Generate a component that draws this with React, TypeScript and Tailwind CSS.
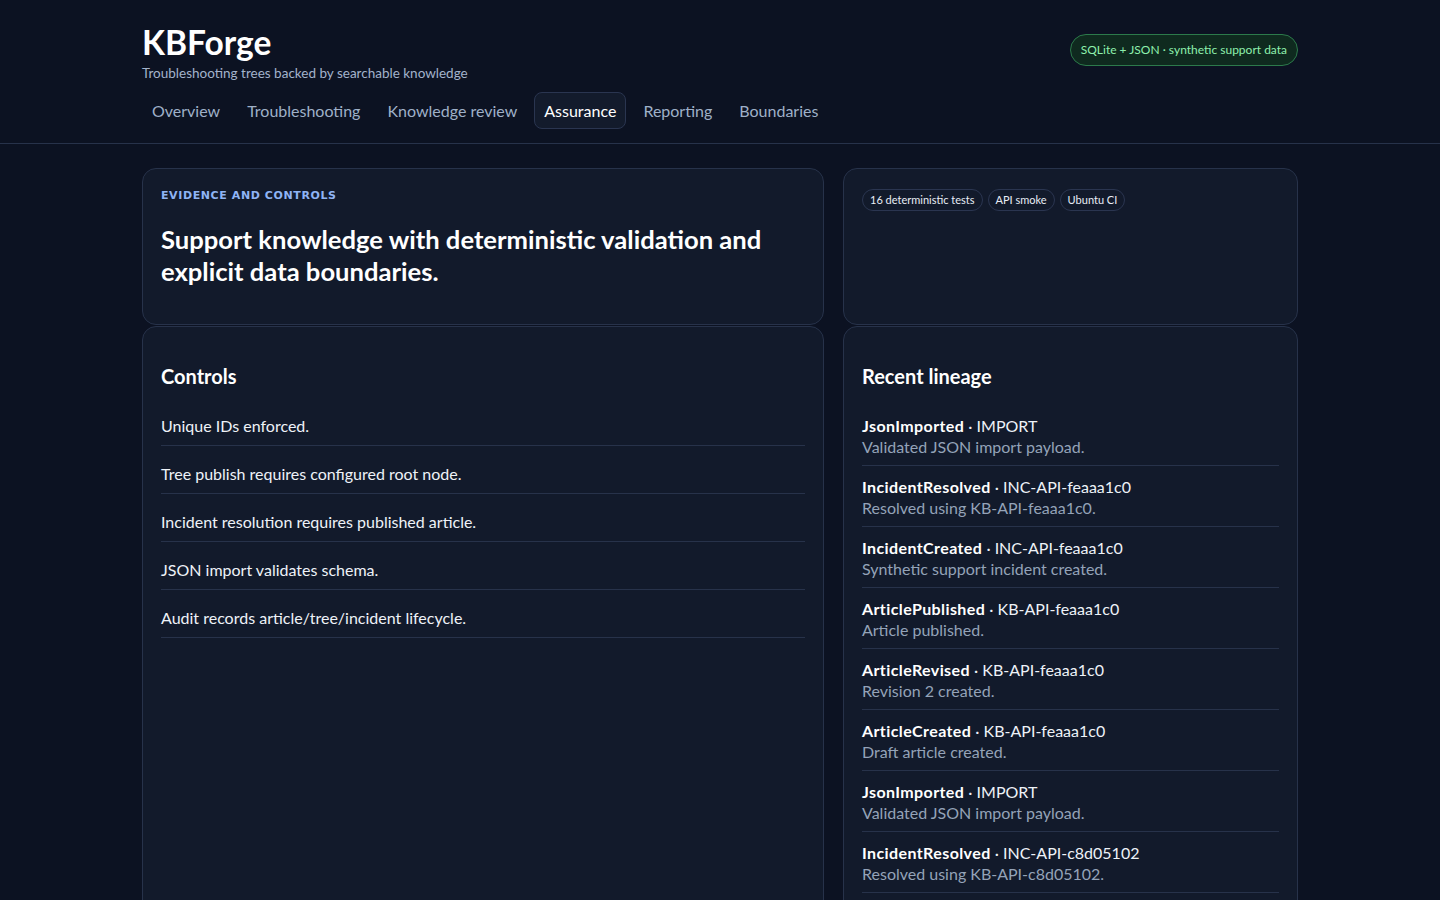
import React from "react";

const tabs = ["Overview", "Troubleshooting", "Knowledge review", "Assurance", "Reporting", "Boundaries"];

const controls = [
  "Unique IDs enforced.",
  "Tree publish requires configured root node.",
  "Incident resolution requires published article.",
  "JSON import validates schema.",
  "Audit records article/tree/incident lifecycle.",
];

const lineage = [
  ["JsonImported", "IMPORT", "Validated JSON import payload."],
  ["IncidentResolved", "INC-API-feaaa1c0", "Resolved using KB-API-feaaa1c0."],
  ["IncidentCreated", "INC-API-feaaa1c0", "Synthetic support incident created."],
  ["ArticlePublished", "KB-API-feaaa1c0", "Article published."],
  ["ArticleRevised", "KB-API-feaaa1c0", "Revision 2 created."],
  ["ArticleCreated", "KB-API-feaaa1c0", "Draft article created."],
  ["JsonImported", "IMPORT", "Validated JSON import payload."],
  ["IncidentResolved", "INC-API-c8d05102", "Resolved using KB-API-c8d05102."],
  ["IncidentCreated", "INC-API-c8d05102", "Synthetic support incident created."],
  ["ArticlePublished", "KB-API-c8d05102", "Article published."],
];

export default function App() {
  return (
    <div
      className="min-h-screen bg-[#0c1222] text-[#e8edf6]"
      style={{ fontFamily: '"Segoe UI", Lato, "Noto Sans", sans-serif' }}
    >
      <header className="border-b border-[#27324a]">
        <div className="mx-auto w-[1156px] pt-[22px] pb-[14px]">
          <div className="flex items-start justify-between">
            <div>
              <h1 className="text-[33.5px] font-bold leading-[40px] text-white">KBForge</h1>
              <p className="mt-[2px] text-[13.5px] leading-[18px] text-[#a3b3cc]">
                Troubleshooting trees backed by searchable knowledge
              </p>
            </div>
            <div className="mt-[12px] rounded-full border border-[#2c7a4b] bg-[#0f2a1f] px-[10px] py-[6px] text-[12px] leading-[18px] text-[#8ef0ad]">
              SQLite + JSON · synthetic support data
            </div>
          </div>
          <nav className="mt-[10px] flex gap-[7px]">
            {tabs.map((t) => (
              <button
                key={t}
                className={
                  t === "Assurance"
                    ? "h-[37px] rounded-[8px] border border-[#2a3550] bg-[#131b2c] px-[9px] text-[16px] text-white"
                    : "h-[37px] rounded-[8px] border border-transparent px-[9px] text-[16px] text-[#9fb0c8]"
                }
              >
                {t}
              </button>
            ))}
          </nav>
        </div>
      </header>

      <main className="mx-auto grid w-[1156px] grid-cols-[682px_455px] gap-x-[19px] gap-y-[1px] pt-[24px]">
        <section className="h-[157px] rounded-[14px] border border-[#27324a] bg-[#121a2b] px-[18px] pt-[20px]">
          <div
            className="text-[11px] font-bold uppercase leading-[14px] tracking-[0.6px] text-[#8fb4f5]"
            style={{ fontFamily: "Verdana, 'DejaVu Sans', sans-serif" }}
          >
            Evidence and controls
          </div>
          <h2 className="mt-[20px] text-[25.6px] font-bold leading-[32px] text-white">
            Support knowledge with deterministic validation and explicit data boundaries.
          </h2>
        </section>
        <section className="h-[157px] rounded-[14px] border border-[#27324a] bg-[#121a2b] px-[18px] pt-[20px]">
          <div className="flex gap-[5px]">
            {["16 deterministic tests", "API smoke", "Ubuntu CI"].map((c) => (
              <span
                key={c}
                className="rounded-full border border-[#2a3550] px-[7px] text-[11px] leading-[20px] text-[#e8edf6]"
              >
                {c}
              </span>
            ))}
          </div>
        </section>

        <section className="rounded-[14px] border border-[#27324a] bg-[#121a2b] px-[18px] pt-[36px]">
          <h3 className="text-[20px] font-bold leading-[26px] text-white">Controls</h3>
          <ul className="mt-[9px]">
            {controls.map((c) => (
              <li key={c} className="border-b border-[#27324a] pt-[16px] pb-[7px] text-[16px] leading-[24px] text-[#eef2f8]">
                {c}
              </li>
            ))}
          </ul>
        </section>
        <section className="rounded-[14px] border border-[#27324a] bg-[#121a2b] px-[18px] pt-[36px] pb-[20px]">
          <h3 className="text-[20px] font-bold leading-[26px] text-white">Recent lineage</h3>
          <ul className="mt-[16px]">
            {lineage.map(([e, id, d], i) => (
              <li key={i} className="border-b border-[#27324a] pt-[10px] pb-[8px] text-[16px] leading-[21px]">
                <div>
                  <span className="font-bold tracking-[0.4px] text-white">{e}</span>
                  <span className="text-[#eef2f8]"> · {id}</span>
                </div>
                <div className="text-[#94a3b8]">{d}</div>
              </li>
            ))}
          </ul>
        </section>
      </main>
    </div>
  );
}
